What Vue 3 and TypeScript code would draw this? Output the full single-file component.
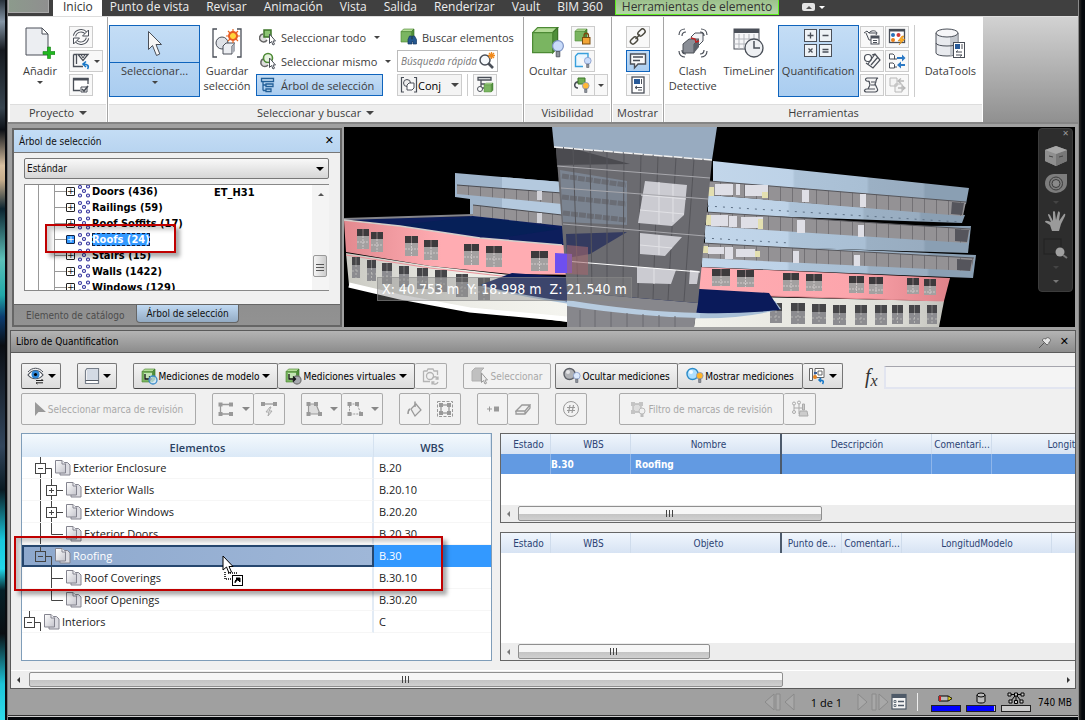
<script setup lang="ts">
import { h, ref } from 'vue'

const K = '#4a4f58'
const cube = (x: number, y: number, s: number) =>
  `<g transform="translate(${x} ${y}) scale(${s})"><path d="M0 4 4 0H20L16 4Z" fill="#b4dc98" stroke="#4d8a35"/><path d="M16 4 20 0V16L16 20Z" fill="#4f8f3a" stroke="#3c7428"/><path d="M0 4H16V20H0Z" fill="#7ab561" stroke="#4d8a35"/></g>`
const bulb = (x: number, y: number, c: string, s = 1) =>
  `<g transform="translate(${x} ${y}) scale(${s})"><circle cx="5" cy="5" r="4.5" fill="${c}" stroke="#7d93c4"/><path d="M3.5 9.5H6.5V14H3.5Z" fill="#8d949e" stroke="#4a4f58" stroke-width=".7"/></g>`
const node = (x: number, y: number) => `<rect x="${x - 2}" y="${y - 2}" width="4" height="4" fill="#999"/>`

type Glyph = [number, number, string]
const glyphs: Record<string, Glyph> = {
  add: [30, 32, `<path d="M1 1H17L23 7V28H1Z" fill="#eceef2" stroke="${K}"/><path d="M17 1V7H23Z" fill="#fff" stroke="${K}"/><path d="M22.5 20h3v4.5h4.5v3h-4.5v4h-3v-4h-4.5v-3h4.5Z" fill="#20b820" stroke="#138013" stroke-width=".6"/>`],
  refresh: [18, 18, `<g fill="none" stroke="${K}" stroke-width="3.4"><path d="M2.5 8C4 2 11 1.5 14 5M15.5 10C14 16 7 16.5 4 13"/></g><g fill="none" stroke="#fff" stroke-width="1.4"><path d="M2.5 8C4 2 11 1.5 14 5M15.5 10C14 16 7 16.5 4 13"/></g><path d="M16.5 2V8H10.5ZM1.5 16V10H7.5Z" fill="#fff" stroke="${K}"/>`],
  reset: [18, 18, `<path d="M1.5 2.5H4.5V12M1.5 2.5V14.5H11" fill="none" stroke="${K}" stroke-width="1.3"/><path d="M6 2.5H16L11 8.5Z" fill="#fff" stroke="${K}" stroke-width="1.3"/><path d="m9 2.5 2 3.5 2-3.5" fill="none" stroke="${K}"/><path d="M15.5 17c2-3 0-5-4-5M14 9.5 11 12l3 3" fill="none" stroke="#1878c8" stroke-width="1.6"/>`],
  options: [18, 18, `<path d="M16 8V2.5H1.5V14.5H8" fill="#fff" stroke="${K}" stroke-width="1.3"/><path d="M1 2H16.5V4.5H1Z" fill="${K}"/><path d="M9 11h6v5H9Z" fill="#fff" stroke="${K}"/><path d="m10 13 2 2 4-5" fill="none" stroke="${K}" stroke-width="1.6"/>`],
  cursor: [16, 28, `<path d="M1.5 1.5V19.5L5.5 15.5 9.5 25.5 12.8 24 9 14.5H14.5Z" fill="#f6f6f6" stroke="${K}"/>`],
  save: [32, 32, `<path d="M6 2H2V30H6M26 2H30V30H26" fill="none" stroke="${K}" stroke-width="1.3"/><circle cx="11" cy="16" r="6" fill="#dfe2e7" stroke="${K}"/><path d="m12 19 3-3h9l-3 3v8h-9Z" fill="#eceef2" stroke="${K}"/><path d="M21 19 24 16V24L21 27Z" fill="#a9adb5"/><circle cx="22" cy="9" r="4" fill="#ffd53c" stroke="#e85a28" stroke-width="2"/><path d="M22 2V6M22 12V16M15 9H19M25 9H29M17 4l3 3M27 4l-3 3M17 14l3-3M27 14l-3-3" stroke="#e8641e" stroke-width="1.2"/>`],
  selAll: [18, 18, `<path d="M4 6a4 4 0 1 0 4 6" fill="#ddd" stroke="#666" stroke-width="1.5"/><path d="M5 2h7v7H5Z" fill="#8cc474" stroke="#3c7428" stroke-width="1.5"/><path d="M10.5 6V15.5L12.5 13.5 14 17 15.5 16.2 14 13H16.5Z" fill="#fff" stroke="${K}"/>`],
  selSame: [18, 18, `<path d="M4 7a4 4 0 1 0 5 6" fill="#ddd" stroke="#666" stroke-width="1.5"/><circle cx="9" cy="6" r="4.5" fill="#e6f3df" stroke="#4d8a35" stroke-width="1.6"/><path d="M10.5 6V15.5L12.5 13.5 14 17 15.5 16.2 14 13H16.5Z" fill="#fff" stroke="${K}"/>`],
  tree: [16, 16, `<g fill="#cfe6fa" stroke="#225f98" stroke-width="1.3"><path d="M1.5 1.5h12v3h-12ZM6 7h7v2.5H6ZM6 12h5v2.5H6ZM3 4.5V13.5M3 8H6M3 13.5H6"/></g>`],
  find: [18, 18, `${cube(1, 1, 0.65)}<path d="M8 11.5 9.5 8h2v3h1V8h2l2 3.5V16h-3.5v-2.5H12V16H8Z" fill="#24578f" stroke="#16385e" stroke-width=".7"/>`],
  search: [18, 18, `<circle cx="7" cy="8" r="5" fill="#f5f8fb" stroke="${K}" stroke-width="1.5"/><path d="m10.5 11.5 4.5 4.5" stroke="${K}" stroke-width="2.6"/><path d="M13.5 0v7M10 3.5h7M11 1l5 5M16 1l-5 5" stroke="#f08a1c" stroke-width="1.3"/>`],
  sets: [18, 18, `<path d="M4 1.5H1.5V16H4M14 1.5H16.5V16H14" fill="none" stroke="${K}" stroke-width="1.2"/><circle cx="7" cy="7" r="3.5" fill="#eee" stroke="${K}"/><path d="M7 9 9 7h5v5l-2 2H7Z" fill="#fff" stroke="${K}"/>`],
  sectree: [18, 18, `<path d="M2 1.5h13V4H2ZM5 4V12M5 8H9M5 12H8" fill="#fff" stroke="${K}" stroke-width="1.3"/><circle cx="4" cy="13" r="2.5" fill="#fff" stroke="${K}"/>${cube(8, 7, 0.45)}`],
  hide: [32, 32, `<g transform="scale(1.25)">${cube(0.5, 0.5, 1)}</g>${bulb(20, 13, '#c9dcfa', 1.2)}`],
  lock: [18, 18, `${cube(1, 1, 0.6)}<path d="M10 9V7.5a2.2 2.2 0 0 1 4.5 0V9" fill="none" stroke="#7a4c10" stroke-width="1.3"/><rect x="8.5" y="9.5" width="7.5" height="6.5" fill="#f2a536" stroke="#7a4c10"/>`],
  hideUn: [18, 18, `<path d="M1.5 4 4 1.5H14V9M1.5 4V14.5H9" fill="#e8f6ff" stroke="#38a0dc" stroke-width="1.4"/>${bulb(10, 5, '#c9dcfa', 0.75)}`],
  unhide: [20, 18, `<path d="M6 6C1 5 0 12 5 12" fill="none" stroke="${K}" stroke-width="1.6"/><path d="M5 2h7v6H5Z" fill="#6fae55" stroke="#3c7428"/>${bulb(9, 6, '#ffb838', 0.75)}`],
  link: [18, 18, `<g fill="none" stroke="#4c4a40" stroke-width="1.5"><rect x="-4" y="-2.5" width="8" height="5" rx="2.5" transform="translate(12.5 4.5) rotate(-45)"/><rect x="-4" y="-2.5" width="8" height="5" rx="2.5" transform="translate(5 12.5) rotate(-45)"/><path d="m6.5 11 4.5-4.5"/></g>`],
  note: [18, 18, `<path d="M1.5 2H16.5V12H9L5.5 16V12H1.5Z" fill="#f8f8f8" stroke="${K}" stroke-width="1.4"/><path d="M4 5H14M4 8.5H11" stroke="${K}" stroke-width="1.3"/>`],
  props: [16, 18, `<rect x="2" y="1" width="12" height="16" fill="#fff" stroke="${K}" stroke-width="1.3"/><rect x="4" y="3" width="6" height="5" fill="#285a98"/><path d="M11.5 3V8M5 11.5H12M8 14H12M7 10 5 11.5 7 13" stroke="${K}" fill="none"/>`],
  clash: [32, 32, `<path d="m14 10 4-4h8v8l-6 6Z" fill="#f2f3f5" stroke="${K}"/><path d="m6 17 6-5h10l-5 5v9H6Z" fill="#8a8e96" stroke="#4c5057"/><path d="m17 17 5-5v8l-5 6Z" fill="#5c6068"/><path d="m14 11 4 1 1 3 3-1" stroke="#c02020" stroke-width="1.4" fill="none"/><g fill="none" stroke="${K}" stroke-width="1.2"><path d="M2 8C2 4 5 2 8 2M5 9c0-3 2-4 4-4M30 8c0-4-3-6-6-6M27 9c0-3-2-4-4-4M2 24c0 4 3 6 6 6M5 23c0 3 2 4 4 4M30 24c0 4-3 6-6 6M27 23c0 3-2 4-4 4"/></g>`],
  timeliner: [32, 32, `<rect x="1" y="2" width="25" height="20" fill="#f6f6f8" stroke="${K}"/><path d="M1 2H26V6H1Z" fill="${K}"/><path d="M1 12H26M1 17H26M6 7V22M11 7V22M16 7V22M21 7V22" stroke="#b4b7bd"/><circle cx="21" cy="21" r="9" fill="#eef0f3" stroke="${K}" stroke-width="1.3"/><path d="M21 14V21H27" fill="none" stroke="${K}" stroke-width="1.5"/>`],
  quant: [30, 30, `<g fill="#eef2f6" stroke="${K}"><rect x="1.5" y="1.5" width="12" height="12"/><rect x="16.5" y="1.5" width="12" height="12"/><rect x="1.5" y="16.5" width="12" height="12"/><rect x="16.5" y="16.5" width="12" height="12"/></g><path d="M4.5 7.5h6M7.5 4.5v6M19.5 7.5h6M5.5 20.5l4 4M9.5 20.5l-4 4M19.5 21.5h6M19.5 24h6" stroke="${K}" stroke-width="1.3"/>`],
  render: [18, 18, `<path d="M1 5l3-2 2 2c2-3 7-3 8 0l-1 2M3 5l3 7h3M6 5h8" fill="#eee" stroke="${K}"/><rect x="8" y="8" width="8" height="8" fill="#fff" stroke="${K}"/><path d="M8 8h8v2.5H8Z" fill="${K}"/><path d="M10 12.5h4M10 14.5h4" stroke="${K}"/>`],
  script: [18, 18, `<rect x="1.5" y="1.5" width="15" height="13" fill="#fff" stroke="${K}" stroke-width="1.3"/><path d="M1 1H17V3.5H1Z" fill="${K}"/><circle cx="5" cy="7" r="2" fill="#2870b8"/><circle cx="10.5" cy="7" r="2" fill="#d03838"/><circle cx="5" cy="12" r="2" fill="#e8801c"/><path d="m14 8-4 5h3l-2 4 6-6h-3l2-3Z" fill="#ffb020" stroke="#c87810" stroke-width=".5"/>`],
  appear: [18, 18, `<circle cx="5" cy="6" r="3.5" fill="#fff" stroke="${K}" stroke-width="1.2"/><path d="m9 3 3-1 5 6-7 8-7-5M12 2 5 12M15 5l-7 8" fill="none" stroke="${K}" stroke-width="1.2"/>`],
  compare: [18, 18, `<g fill="#fff" stroke="${K}"><path d="M1.5 2H5L6.5 3.5V7h-5ZM1.5 11H5L6.5 12.5V16h-5Z"/><path d="M6 7h3M6 15h3"/></g><path d="M9 5h5V2.5l3.5 3.5L14 9.5V7H9ZM17 12h-4V9.5L9 13l4 3.5V14h4Z" fill="#2a78c4"/>`],
  batch: [18, 18, `<path d="M4 2H15c-3 1-1 3-3 6l2 4c2 3-1 4-2 4H3c-3-1-1-3 1-3h8M4 2C1 3 3 6 6 5M6 5l1 4-2 4M8 6h4M8 9h4" fill="#f4f4f4" stroke="${K}" stroke-width="1.2"/>`],
  sync: [18, 18, `<g fill="#f4f4f4" stroke="#b8b8b8"><path d="M2 2h7v8H2ZM7 8h7v8H7Z"/></g><path d="m16 5-5 0M13 2.5 10 5l3 2.5M10 12h6M14 9.5l3 2.5-3 2.5" fill="none" stroke="#b8b8b8" stroke-width="1.4"/>`],
  data: [32, 32, `<path d="M2 6V26c0 4 22 4 22 0V6" fill="#e8eaee" stroke="${K}"/><path d="M16 9.5V28.5c5 0 7-1 7.5-3V6Z" fill="#c4c8ce"/><ellipse cx="13" cy="6" rx="11" ry="4" fill="#f6f6f8" stroke="${K}"/><path d="M2 16c0 4 22 4 22 0" fill="none" stroke="${K}"/><rect x="19.5" y="15.5" width="11" height="15" fill="#fff" stroke="${K}"/><rect x="21" y="17" width="5" height="5" fill="#285a98"/><path d="M28 17V22M22 25h6M22 28h6M24 23.5 22 25M26 29.5 28 28" stroke="${K}" fill="none"/>`],
  fam: [14, 14, `<g fill="#fff" stroke="#30309c" stroke-width="1.1"><circle cx="3" cy="3" r="1.5"/><circle cx="11" cy="2.5" r="1.5"/><circle cx="7" cy="7" r="1.5"/><circle cx="3" cy="11.5" r="1.5"/><circle cx="11" cy="11.5" r="1.5"/></g>`],
  eye: [18, 18, `<path d="M1 8C5 2 12 2 16 8 12 13 5 13 1 8Z" fill="#fff" stroke="${K}" stroke-width="1.2"/><path d="M1 5C5 0 12 0 16 5" fill="none" stroke="${K}"/><circle cx="8.5" cy="7.5" r="4" fill="#2f86d6"/><circle cx="8.5" cy="7.5" r="1.6" fill="#000"/><path d="M9 13.5h7M14.5 12l1.5 1.5M10.5 17 9 15.8h7" stroke="#222" fill="none"/>`],
  book: [16, 18, `<path d="M1.5 3.5 3 1.5H14.5V16.5H1.5Z" fill="#fff" stroke="#777f8a" stroke-width="1.2"/><path d="M3 2H14V13H3Z" fill="#d3dae4"/><path d="M1.5 13.5H14.5" stroke="#555c66"/>`],
  model: [17, 17, `${cube(1, 1, 0.65)}<path d="M3 5h8v7H3Z" fill="#c4e4b4"/><path d="M4 6v5h6M8 8.5l2.5 2.5L8 13.5" fill="none" stroke="#111" stroke-width="1.3"/><circle cx="12" cy="12" r="4" fill="#cdeafd" fill-opacity=".7" stroke="#3c8cc8" stroke-width="1.3"/>`],
  virt: [17, 17, `${cube(1, 1, 0.65)}<path d="M3 5h8v7H3Z" fill="#c4e4b4"/><circle cx="12" cy="12" r="4" fill="#a8aab0" stroke="#777" stroke-width="1.3"/><path d="M4 6v5h6M8 8.5l2.5 2.5L8 13.5" fill="none" stroke="#111" stroke-width="1.3"/>`],
  camera: [18, 18, `<g fill="none" stroke="#b4b4b4" stroke-width="1.3"><path d="M1.5 4H5L6 2h5l1 2h3.5V8M1.5 4V14.5H8"/><circle cx="8" cy="9" r="3.5"/><path d="M10 12c1-3 5-3 6 0M16 9.5V12h-2.5M16 15c-1 3-5 3-6 0M10 17.5V15h2.5"/></g>`],
  boxsel: [18, 18, `<path d="m1 4 3-3h9l-3 3v10H1Z" fill="#c0c0c0" stroke="#b0b0b0"/><path d="M10.5 6v9.5l2-2 1.5 3.5 1.5-.8L14 13h2.5Z" fill="#eee" stroke="#999"/>`],
  hideM: [18, 18, `<circle cx="6.5" cy="7" r="5.5" fill="#b0b2b6" stroke="#5c5f66" stroke-width="1.4"/><circle cx="5" cy="5" r="2" fill="#e4e4e6"/>${bulb(10, 5, '#dce9fb', 0.75)}`],
  showM: [18, 18, `<circle cx="6.5" cy="7" r="5.5" fill="#aee0ff" stroke="#2c8cc8" stroke-width="1.4"/><circle cx="5" cy="5" r="2" fill="#f4fbff"/>${bulb(10, 5, '#ffb428', 0.75)}`],
  resetM: [18, 18, `<path d="M1.5 1.5h3v12h-3ZM7 1.5h9v9H7ZM10 4h4v4h-4Z" fill="#fff" stroke="#666"/><path d="M6 5h3v2H6Z" fill="#38609c"/><circle cx="7" cy="10" r="2" fill="#e88420"/><path d="M14.5 17c2-3 0-4-3-4M13 11l-2 2 2 2" fill="none" stroke="#1878c8" stroke-width="1.5"/>`],
  ptr: [13, 16, `<path d="M1 1V15L4.5 11 12 11Z" fill="#999"/>`],
  poly: [18, 16, `<path d="M14 3.5H3.5V13H14" fill="none" stroke="#999" stroke-width="1.3"/>${node(3.5, 3.5)}${node(14, 3.5)}${node(3.5, 13)}${node(14, 13)}`],
  quick: [18, 16, `<path d="M2 3H16" stroke="#999" stroke-width="1.3"/>${node(3, 3)}${node(15, 3)}<path d="m10 6-4 5h3l-1 4 4-5H9l2-4Z" fill="#eee" stroke="#aaa"/>`],
  area: [18, 16, `<path d="M3.5 3H11L15 13H3.5Z" fill="#ddd" stroke="#999" stroke-width="1.2"/>${node(3.5, 3)}${node(11, 3)}${node(15, 13)}${node(3.5, 13)}`],
  perim: [18, 16, `<path d="M3.5 3H11L15 13H3.5Z" fill="none" stroke="#999" stroke-dasharray="2 1"/>${node(3.5, 3)}${node(11, 3)}${node(15, 13)}${node(3.5, 13)}`],
  bucket: [16, 16, `<path d="m4 8 5-5 5 6-6 6Z" fill="#eee" stroke="#999" stroke-width="1.2"/><path d="M8 6V0.5M3 8c-2 1-2 4-2 5" fill="none" stroke="#999" stroke-width="1.5"/>`],
  backout: [18, 18, `<rect x="1.5" y="1.5" width="15" height="15" fill="none" stroke="#999" stroke-dasharray="3 1.5"/><rect x="5" y="5" width="8" height="8" fill="none" stroke="#999" stroke-width="1.3"/>${node(5, 5)}${node(13, 5)}${node(5, 13)}${node(13, 13)}`],
  plus: [14, 12, `<path d="M1 6H6M3.5 3.5V8.5" stroke="#999"/><rect x="8" y="3.5" width="5" height="5" fill="#999"/>`],
  eraser: [16, 14, `<path d="m1 9 6-6h8l-5 6ZM1 9v3h9l5-6V3M10 9v3" fill="#eee" stroke="#999" stroke-width="1.3"/>`],
  hash: [18, 18, `<circle cx="9" cy="9" r="7.5" fill="none" stroke="#999"/><path d="M8 5 6.5 13M11.5 5 10 13M5 7.5h8M5 10.5h8" stroke="#999" stroke-width="1.2"/>`],
  filter: [17, 17, `<path d="M3 3h8v8H3Z" fill="#ddd" stroke="#bbb" stroke-width="1.3"/><path d="M1 1h4v4H1ZM9 1h4v4H9ZM1 9h4v4H1Z" fill="#c4c4c4"/><circle cx="12" cy="10" r="3" fill="#f0f0f0" stroke="#bbb"/><path d="M10.5 13h3v3h-3Z" fill="#bbb"/>`],
  brush: [18, 18, `<g fill="none" stroke="#aaa"><circle cx="3" cy="3.5" r="1.5"/><circle cx="8" cy="2.5" r="1.5"/><circle cx="3" cy="12" r="1.5"/><path d="M8 4v10M3 8h9M3 5v5"/><path d="M11.5 4h2v6h-2ZM9 11h7l1 5H8Z" fill="#ccc"/></g>`],
  pin: [14, 14, `<path d="m1 13 5-5" stroke="#555"/><path d="m4 5 5 5c2-1 2-2 2-3 2 0 2-3 0-4s-3 0-3 1c-2-1-3 0-4 1Z" fill="#e4e4e4" stroke="#666"/>`],
  pages: [17, 17, `<path d="M8 3.5H13.5L16 6V16H6V3.5Z" fill="#dcdce2" stroke="#84848f"/><path d="M1.5 1.5H8L11.5 5V14H1.5Z" fill="url(#pg)" stroke="#84848f"/><path d="M8 1.5V5H11.5" fill="#f4f4f8" stroke="#84848f"/>`],
  sheet: [16, 18, `<rect x="1" y="1.5" width="14" height="14.5" fill="#f4f4f4" stroke="#4f5a68" stroke-width="1.2"/><path d="M1 1.5h14V5H1Z" fill="#4f5a68"/><path d="M3 7.5h2v2H3ZM3 11.5h2v2H3Z" fill="none" stroke="#4f5a68" stroke-width=".8"/><path d="M7 8.5h6M7 12.5h6" stroke="#4f5a68" stroke-width="1.3"/>`],
  first: [18, 20, `<g fill="#a8a8a8" stroke="#8a8a8a"><path d="M10 2V18L1 10ZM12 2h4V18h-4Z"/></g>`],
  prev: [12, 20, `<path d="M10 2V18L1 10Z" fill="#a8a8a8" stroke="#8a8a8a"/>`],
  next: [12, 20, `<path d="M1 2V18L10 10Z" fill="#a8a8a8" stroke="#8a8a8a"/>`],
  last: [18, 20, `<g fill="#a8a8a8" stroke="#8a8a8a"><path d="M1 2h4V18H1ZM8 2V18L17 10Z"/></g>`],
  pencil: [16, 12, `<path d="M1 4H10L14 6.5 10 9H1Z" fill="#bbb" stroke="#000"/><path d="M1 4h2v5H1Z" fill="#d02020"/><path d="M10 4 14 6.5 10 9Z" fill="#e8d820" stroke="#000" stroke-width=".6"/>`],
  disk: [12, 12, `<path d="M2 3V9.5c0 2 8 2 8 0V3" fill="#bbb" stroke="#000"/><ellipse cx="6" cy="3" rx="4" ry="2" fill="#bbb" stroke="#000"/>`],
  web: [18, 12, `<path d="M3 2.5H15M9 2.5 4 9M9 2.5V10M9 2.5 14 9" stroke="#000" fill="none"/><g fill="#ccc" stroke="#000"><path d="M1 1h3v3H1ZM7.5 1h3v3h-3ZM14 1h3v3h-3ZM2 8h3v3H2ZM7.5 8.5h3v3h-3ZM13 8h3v3h-3Z"/></g>`],
  viewcube: [24, 22, `<path d="m12 1 11 4v11l-11 5L1 16V5Z" fill="#8d8d8d"/><path d="m12 9 11-4v11l-11 5Z" fill="#777"/><path d="m1 5 11 4v12L1 16Z" fill="#8f8f8f"/><path d="m1 5 11-4 11 4-11 4Z" fill="#a8a8a8"/><path d="m5 11 4 1M15 12l4-1" stroke="#444"/>`],
  wheel: [24, 22, `<path d="M10 1h13v9a11 10 0 0 1-11 10C6 20 1 16 1 10.5S5 1 10 1Z" fill="#7d7d7d"/><circle cx="12" cy="10.5" r="6.5" fill="none" stroke="#3c3c3c"/><circle cx="12" cy="10.5" r="4" fill="#8a8a8a" stroke="#3c3c3c"/>`],
  hand: [24, 22, `<path d="M8 21 6 15 1 12q0-2 3-1l3 1L4 5q0-2 2 0l3 6V2q1-2 2 0l1 8 2-8q1-2 2 1l-1 8 5-7q2-1 1 2l-4 8-2 7Z" fill="#9a9a9a"/>`],
  zoomw: [26, 22, `<rect x="1" y="1" width="17" height="15" fill="none" stroke="#222"/><circle cx="17" cy="14" r="4.5" fill="#a0a0a0"/><path d="m20 17 4 3" stroke="#777" stroke-width="2"/>`],
}
const Icon = (p: { n: string }) => {
  const g = glyphs[p.n]
  return h('svg', { viewBox: `0 0 ${g[0]} ${g[1]}`, width: g[0], height: g[1], fill: 'none', 'aria-hidden': 'true', innerHTML: g[2] })
}

const menus = ['Punto de vista', 'Revisar', 'Animación', 'Vista', 'Salida', 'Renderizar', 'Vault', 'BIM 360']
const toolGrid = [
  ['render', 'Autodesk Rendering'], ['script', 'Animator'],
  ['appear', 'Appearance Profiler'], ['compare', 'Comparar'],
  ['batch', 'Batch Utility'], ['sync', 'Sincronizar'],
]
const quick = ref('')
const families = ['Doors (436)', 'Railings (59)', 'Roof Soffits (17)', 'Roofs (24)', 'Stairs (15)', 'Walls (1422)', 'Windows (129)']

interface Item { name: string; wbs: string; depth: number; box?: '+' | '-'; lines: string }
const items: Item[] = [
  { name: 'Exterior Enclosure', wbs: 'B.20', depth: 1, box: '-', lines: 'M18.5 0V22M23 11.5H29.5V22' },
  { name: 'Exterior Walls', wbs: 'B.20.10', depth: 2, box: '+', lines: 'M18.5 0V22M29.5 0V22M29 11.5H41' },
  { name: 'Exterior Windows', wbs: 'B.20.20', depth: 2, box: '+', lines: 'M18.5 0V22M29.5 0V22M29 11.5H41' },
  { name: 'Exterior Doors', wbs: 'B.20.30', depth: 2, lines: 'M18.5 0V22M29.5 0V11.5H41' },
  { name: 'Roofing', wbs: 'B.30', depth: 1, box: '-', lines: 'M18.5 0V6M23 11.5H29.5V22' },
  { name: 'Roof Coverings', wbs: 'B.30.10', depth: 2, lines: 'M29.5 0V22M29 11.5H41' },
  { name: 'Roof Openings', wbs: 'B.30.20', depth: 2, lines: 'M29.5 0V11.5H41' },
  { name: 'Interiors', wbs: 'C', depth: 0, box: '-', lines: 'M7.5 0V11M12 11.5H18.5V20' },
]

const pts = (a: number[][]) => a.map((p) => p.join(',')).join(' ')
const slab = (x0: number, y0: number, y1: number, x2: number, y2: number, y3: number) =>
  pts([[x0, y0], [x2, y2], [x2 - 3, y3], [x0, y1]])
const pinkWindows = [
  [357, 229, 12, 20], [371, 232, 12, 20], [405, 236, 13, 20], [424, 240, 14, 20], [464, 244, 15, 21], [486, 246, 16, 21], [531, 251, 17, 20],
  [712, 269, 18, 17], [737, 270, 17, 17], [783, 273, 16, 18], [806, 274, 16, 17], [849, 276, 15, 17], [869, 277, 14, 17], [907, 278, 12, 16], [924, 279, 12, 16],
]
const creamWindows = [
  [352, 257, 8, 21], [367, 260, 9, 21], [382, 263, 10, 21], [399, 266, 10, 21], [417, 268, 11, 21], [435, 270, 12, 22], [456, 274, 12, 23], [478, 278, 12, 22],
  [770, 303, 12, 20], [791, 303, 14, 21], [812, 304, 14, 20], [833, 305, 13, 20], [855, 305, 12, 20], [875, 305, 12, 20], [892, 305, 11, 19], [909, 305, 11, 19], [927, 305, 10, 19],
]
</script>

<template>
  <div class="window">
    <svg width="0" height="0" class="defs" aria-hidden="true"><defs><linearGradient id="pg" x1="0" y1="0" x2="1" y2="1"><stop offset="0" stop-color="#fff" /><stop offset="1" stop-color="#c4c4cc" /></linearGradient></defs></svg>
    <div class="glass left"></div>
    <main class="app">
      <nav class="menubar">
        <button class="appbtn" aria-label="Menú de la aplicación"></button>
        <button class="tab on">Inicio</button>
        <button v-for="m in menus" :key="m" class="tab">{{ m }}</button>
        <button class="tab context">Herramientas de elemento</button>
        <button class="mini" aria-label="Minimizar cinta"><i class="up"></i></button>
        <i class="dn light"></i>
      </nav>

      <div class="ribbon">
        <section class="panel">
          <div class="pbody proj">
            <button class="big addb"><Icon n="add" /><span>Añadir</span><i class="dn"></i></button>
            <div class="stack">
              <button class="sm" aria-label="Actualizar"><Icon n="refresh" /></button>
              <button class="sm wide" aria-label="Restablecer"><Icon n="reset" /><i class="dn"></i></button>
              <button class="sm" aria-label="Opciones de archivo"><Icon n="options" /></button>
            </div>
          </div>
          <h2>Proyecto <i class="dn big-dn"></i></h2>
        </section>
        <section class="panel p-sel">
          <div class="pbody">
            <button class="big split"><span class="half"><Icon n="cursor" /></span><span>Seleccionar...</span><i class="dn"></i></button>
            <button class="big save"><Icon n="save" /><span>Guardar<br />selección</span></button>
            <div class="stack list">
              <button class="row"><Icon n="selAll" />Seleccionar todo<i class="dn"></i></button>
              <button class="row"><Icon n="selSame" />Seleccionar mismo<i class="dn"></i></button>
              <button class="row active"><Icon n="tree" />Árbol de selección</button>
            </div>
            <div class="stack finds">
              <button class="row"><Icon n="find" />Buscar elementos</button>
              <label class="quick"><input v-model="quick" type="text" placeholder="Búsqueda rápida" aria-label="Búsqueda rápida" /><Icon n="search" /></label>
              <div class="setrow">
                <label class="conj"><Icon n="sets" /><select aria-label="Conjuntos"><option>Conj</option></select><i class="dn big-dn"></i></label>
                <span class="vsep"></span>
                <button class="sm" aria-label="Árbol de conjuntos"><Icon n="sectree" /></button>
              </div>
            </div>
          </div>
          <h2>Seleccionar y buscar <i class="dn big-dn"></i></h2>
        </section>
        <section class="panel p-vis">
          <div class="pbody">
            <button class="big ocult"><Icon n="hide" /><span>Ocultar</span></button>
            <div class="stack">
              <button class="sm" aria-label="Requerir"><Icon n="lock" /></button>
              <button class="sm" aria-label="Ocultar no seleccionados"><Icon n="hideUn" /></button>
              <div class="pair"><button class="sm" aria-label="Mostrar todo"><Icon n="unhide" /></button><button class="sm thin" aria-label="Más opciones"><i class="dn"></i></button></div>
            </div>
          </div>
          <h2>Visibilidad</h2>
        </section>
        <section class="panel p-show">
          <div class="pbody">
            <div class="stack">
              <button class="sm" aria-label="Vínculos"><Icon n="link" /></button>
              <button class="sm active" aria-label="Propiedades rápidas"><Icon n="note" /></button>
              <button class="sm" aria-label="Propiedades"><Icon n="props" /></button>
            </div>
          </div>
          <h2>Mostrar</h2>
        </section>
        <section class="panel p-tools">
          <div class="pbody">
            <button class="big t1"><Icon n="clash" /><span>Clash<br />Detective</span></button>
            <button class="big t2"><Icon n="timeliner" /><span>TimeLiner</span></button>
            <button class="big t3"><Icon n="quant" /><span>Quantification</span></button>
            <div class="grid6"><button v-for="t in toolGrid" :key="t[0]" class="sm" :aria-label="t[1]"><Icon :n="t[0]" /></button></div>
            <span class="vsep tall"></span>
            <button class="big t4"><Icon n="data" /><span>DataTools</span></button>
          </div>
          <h2>Herramientas</h2>
        </section>
        <div class="rest"></div>
      </div>

      <div class="docks">
        <section class="dock">
          <header class="dtitle"><span>Árbol de selección</span><button class="close" aria-label="Cerrar">✕</button></header>
          <div class="dbody">
            <div class="combo"><select aria-label="Orden del árbol"><option>Estándar</option></select><i class="dn big-dn"></i></div>
            <div class="tree">
              <ul>
                <li v-for="(f, i) in families" :key="f" :class="{ sel: i === 3 }">
                  <i class="trunk"></i><i class="branch"></i><i class="box">+</i><Icon n="fam" /><b>{{ f }}</b>
                </li>
              </ul>
              <b class="other">ET_H31</b>
              <div class="vscroll"><i class="up"></i><span class="vthumb"></span></div>
            </div>
            <div class="mark mark-a"></div>
          </div>
          <div class="dtabs"><button>Elemento de catálogo</button><button class="on">Árbol de selección</button></div>
        </section>

        <section class="view">
          <svg class="scene" viewBox="344 127 731 200" preserveAspectRatio="xMinYMin slice" role="img" aria-label="Modelo 3D">
            <defs>
              <linearGradient id="bl" x1="0" x2="1"><stop offset="0" stop-color="#c2d6ea" /><stop offset=".31" stop-color="#bdd2e7" /><stop offset=".32" stop-color="#adc3d8" /><stop offset=".6" stop-color="#a9bfd4" /><stop offset=".61" stop-color="#9bb0c4" /><stop offset=".82" stop-color="#98acc0" /><stop offset=".83" stop-color="#8a9fb3" /><stop offset="1" stop-color="#8a9fb3" /></linearGradient>
              <linearGradient id="pl" x1="0" x2="1"><stop offset="0" stop-color="#e2898f" /><stop offset=".4" stop-color="#ffacb2" /><stop offset="1" stop-color="#ffacb2" /></linearGradient>
              <linearGradient id="pr" x1="0" x2="1"><stop offset="0" stop-color="#ffacb2" /><stop offset=".6" stop-color="#fca5ac" /><stop offset="1" stop-color="#df8289" /></linearGradient>
              <linearGradient id="cr" x1="0" x2="1"><stop offset="0" stop-color="#f2f2ec" /><stop offset=".8" stop-color="#deded8" /><stop offset="1" stop-color="#c2c2bc" /></linearGradient>
              <linearGradient id="cl" x1="0" x2="1"><stop offset="0" stop-color="#c9c9c2" /><stop offset=".5" stop-color="#ecece6" /><stop offset="1" stop-color="#f4f4ef" /></linearGradient>
              <pattern id="cells" width="12" height="10" patternUnits="userSpaceOnUse"><rect width="12" height="10" fill="#949295" /><path d="M.5 0V10" stroke="#737175" /></pattern>
            </defs>
            <rect x="344" y="127" width="731" height="200" fill="#000" />
            <polygon points="455,173 502,177 562,182 562,236 470,218 470,199 455,197" fill="#9fb4ca" />
            <polygon points="502,177 562,182 562,234 502,222" fill="#b4c9de" />
            <polygon points="457,185 562,193 562,204 457,194" fill="url(#cells)" />
            <polygon points="473,205 562,215 562,227 473,216" fill="url(#cells)" />
            <path d="M457 185 562 193M473 205 562 215" stroke="#4b4b50" fill="none" />
            <path d="M537 191h5v9h-5ZM537 213h5v10h-5Z" fill="#d2d2d8" />
            <polygon points="344,219 473,216 563,226 628,232 590,254 480,238 400,226" fill="#0d1e5c" />
            <polygon points="400,225 470,217 520,222 560,229 500,238" fill="#062058" />
            <path d="M344 219 473 215" stroke="#85858a" stroke-width="2" />
            <polygon points="344,220 400,226 480,238 562,245 588,246 588,275 510,274 430,266 346,252" fill="url(#pl)" />
            <path d="M344 220 400 226 480 238 562 245" stroke="#d3d0cc" fill="none" stroke-width="1.5" />
            <polygon points="346,253 430,266 510,275 567,282 567,322 470,309 400,295 349,285" fill="url(#cl)" />
            <path d="M349 285 400 297 470 310 567 319" stroke="#fff" stroke-width="5" fill="none" />
            <path d="M346 255 430 268 510 277" stroke="#eb9299" fill="none" />

            <polygon :points="slab(713, 161, 182, 969, 188, 204)" fill="url(#bl)" />
            <polygon :points="slab(708, 195, 214, 965, 215, 223)" fill="url(#bl)" />
            <polygon :points="slab(705, 225, 245, 971, 226, 253)" fill="url(#bl)" />
            <polygon :points="slab(702, 243, 267, 976, 255, 278)" fill="url(#bl)" />
            <polygon :points="slab(709, 181, 195, 966, 202, 216)" fill="url(#cells)" />
            <polygon :points="slab(706, 212, 226, 970, 229, 243)" fill="url(#cells)" />
            <polygon :points="slab(702, 243, 258, 974, 258, 271)" fill="url(#cells)" />
            <path d="M709 181 966 202M706 212 970 229M702 243 974 258" stroke="#55555a" fill="none" />
            <g fill="#dfdfe6">
              <path d="M715 184h18v11h-18ZM736 184h4v11h-4ZM745 185h23v11h-23ZM802 190h7v12h-7ZM860 194h6v13h-6ZM711 215h17v11h-17ZM729 216h8v11h-8ZM741 217h22v11h-22ZM797 220h8v13h-8ZM858 225h6v12h-6ZM708 247h16v7h-16ZM725 247h8v12h-8ZM736 249h19v8h-19ZM793 251h6v12h-6ZM854 255h6v11h-6Z" />
            </g>
            <g fill="#e3dfb0"><path d="M708 187h6v9h-6ZM762 192h6v6h-6ZM706 215h5v10h-5ZM758 219h5v10h-5ZM703 246h5v7h-5ZM755 251h5v6h-5Z" /></g>
            <g fill="#55555c"><path d="M952 202l12 1-2 12-11-1ZM955 229l14 1-2 12-12-1ZM957 259l15 1-2 11-13-1Z" /></g>
            <path d="M707 206 960 222M704 238 790 243" stroke="#5d7085" stroke-dasharray="2 6" fill="none" />
            <polygon points="698,267 950,278 944,301 698,294" fill="url(#pr)" />
            <polygon points="698,296 944,301 939,327 694,327" fill="url(#cr)" />
            <path d="M770 296 944 301" stroke="#e78d94" />
            <g v-for="w in pinkWindows" :key="'p' + w[0]">
              <rect :x="w[0]" :y="w[1]" :width="w[2]" :height="w[3]" fill="#a3a0a0" />
              <rect :x="w[0]" :y="w[1]" :width="w[2]" height="7" fill="#3c3a3c" />
              <path :d="`M${w[0] + w[2] / 2} ${w[1] + 7}v${w[3] - 7}M${w[0]} ${w[1] + 13}h${w[2]}`" stroke="#d0caca" stroke-dasharray="2 1" />
              <path :d="`M${w[0] + w[2] / 2} ${w[1]}v7`" stroke="#8a7a7c" />
            </g>
            <g v-for="w in creamWindows" :key="'c' + w[0]">
              <rect :x="w[0]" :y="w[1]" :width="w[2]" :height="w[3]" fill="#8c8c90" />
              <rect :x="w[0]" :y="w[1]" :width="w[2]" height="8" fill="#454548" />
              <path :d="`M${w[0] + w[2] / 2} ${w[1] + 8}v${w[3] - 8}M${w[0]} ${w[1] + 14}h${w[2]}`" stroke="#b4b4b2" stroke-dasharray="2 2" />
              <path :d="`M${w[0] + w[2] / 2} ${w[1]}v8`" stroke="#7c7c7c" />
            </g>
            <path d="M480 287Q560 306 690 318 740 320 781 309L775 301Q600 300 480 287Z" fill="#a8bfd6" />
            <path d="M480 285 512 273 567 277 700 289 769 293 780 310Q740 314 700 313 560 306 480 285Z" fill="#0a1a5a" />
            <polygon points="567,292 698,303 694,327 567,327" fill="#87878c" />
            <path d="M567 306Q640 317 700 318V313Q640 312 567 300Z" fill="#b7cce0" />
            <path d="M580 310v17M595 310v17M611 312v15M627 313v14M643 314v13M659 315v12M675 316v11" stroke="#6b6b70" />
            <polygon points="552,127 717,127 712,160 554,147" fill="#98abc0" />
            <polygon points="556,147 712,160 698,303 567,292" fill="#6b6b70" />
            <polygon points="556,147 575,149 630,164 557,165" fill="#4b4b50" />
            <polygon points="560,170 627,181 627,225 563,222" fill="#7b8491" />
            <polygon points="566,234 627,232 590,254 567,258" fill="#343b60" />
            <path d="M562 176 626 185M562 197 626 204M563 213 626 220" stroke="#6a6d75" stroke-width="5" stroke-dasharray="7 1" />
            <path d="M573 149 578 292M590 150 592 294M607 152 607 295M624 153 623 297M641 154 638 298M658 156 653 299M676 157 668 300M694 159 684 301" stroke="#55555a" />
            <g fill="#cbcbd1"><path d="M645 181 687 185 684 215 672 226 638 223ZM640 233 682 237 665 256 640 254ZM637 267 676 270 671 284 637 283Z" /><path d="M690 270l9 1-2 13h-8Z" /></g>
            <path d="M659 182v42M673 184v38M641 195l45 4M640 210l44 4M659 235v20M640 245l32 3M654 268v16" stroke="#e2e2e6" />
            <path d="M554 147 712 160" stroke="#f2f2f2" stroke-width="1.5" stroke-dasharray="9 1" />
            <path d="M557 166 710 178M561 188 708 199M563 224 705 236" stroke="#a8a8ad" />
            <path d="M565 261 700 272" stroke="#fff" />
            <polygon points="555,253 572,254 572,273 555,273" fill="#6e4ff0" />
            <polygon points="567,245 588,247 588,275 567,274" fill="#a2686e" fill-opacity=".6" />
          </svg>
          <div class="coords">X: 40.753 m&nbsp; Y: 18.998 m&nbsp; Z: 21.540 m</div>
          <div class="navbar3d">
            <span class="nx">✕</span>
            <Icon n="viewcube" /><Icon n="wheel" /><i class="dn"></i><Icon n="hand" /><Icon n="zoomw" /><i class="dn"></i><i class="dn last"></i>
          </div>
        </section>
      </div>

      <section class="quantp">
        <header class="qtitle"><span>Libro de Quantification</span><Icon n="pin" /><button class="close" aria-label="Cerrar libro">✕</button></header>
        <div class="qbody">
          <div class="bar b1">
            <div class="grp"><button class="w40" aria-label="Vista"><Icon n="eye" /><i class="dn big-dn"></i></button></div>
            <div class="grp"><button class="w40" aria-label="Catálogo"><Icon n="book" /><i class="dn big-dn"></i></button></div>
            <div class="grp">
              <button class="w145"><Icon n="model" />Mediciones de modelo<i class="dn big-dn"></i></button>
              <button class="w137"><Icon n="virt" />Mediciones virtuales<i class="dn big-dn"></i></button>
              <button class="w32" disabled aria-label="Actualizar vista"><Icon n="camera" /></button>
            </div>
            <div class="near">
              <div class="grp"><button class="w88" disabled><Icon n="boxsel" />Seleccionar</button></div>
              <div class="grp">
                <button class="w123"><Icon n="hideM" />Ocultar mediciones</button>
                <button class="w125"><Icon n="showM" />Mostrar mediciones</button>
                <button class="w40" aria-label="Restablecer aspecto"><Icon n="resetM" /><i class="dn big-dn"></i></button>
              </div>
            </div>
            <label class="fx"><span>f<sub>x</sub></span><input type="text" aria-label="Fórmula" /></label>
          </div>
          <div class="bar b2">
            <div class="grp"><button class="w175" disabled><Icon n="ptr" />Seleccionar marca de revisión</button></div>
            <div class="grp"><button class="w42" disabled aria-label="Polilínea"><Icon n="poly" /><i class="dn big-dn"></i></button><button class="w31" disabled aria-label="Línea rápida"><Icon n="quick" /></button></div>
            <div class="grp"><button class="w41" disabled aria-label="Área"><Icon n="area" /><i class="dn big-dn"></i></button><button class="w41" disabled aria-label="Perímetro"><Icon n="perim" /><i class="dn big-dn"></i></button></div>
            <div class="grp"><button class="w31" disabled aria-label="Relleno"><Icon n="bucket" /></button><button class="w31" disabled aria-label="Recorte"><Icon n="backout" /></button></div>
            <div class="grp"><button class="w31" disabled aria-label="Añadir vértice"><Icon n="plus" /></button><button class="w31" disabled aria-label="Borrador"><Icon n="eraser" /></button></div>
            <div class="grp"><button class="w32" disabled aria-label="Recuento"><Icon n="hash" /></button></div>
            <div class="grp far"><button class="w165" disabled><Icon n="filter" />Filtro de marcas de revisión</button><button class="w32" disabled aria-label="Limpiar"><Icon n="brush" /></button></div>
          </div>

          <div class="panes">
            <div class="elements">
              <table>
                <colgroup><col /><col class="c-wbs" /></colgroup>
                <thead><tr><th>Elementos</th><th>WBS</th></tr></thead>
                <tbody>
                  <tr v-for="it in items" :key="it.wbs" :class="{ sel: it.name === 'Roofing' }">
                    <td>
                      <div class="name">
                        <svg :width="21 + it.depth * 11" height="22" aria-hidden="true">
                          <path :d="it.lines" stroke="#444" fill="none" />
                          <g v-if="it.box" :transform="`translate(${it.depth * 11} 0)`" stroke="#444">
                            <rect x="2.5" y="6.5" width="10" height="10" fill="#fff" :fill-opacity="it.name === 'Roofing' ? 0 : 1" />
                            <path :d="it.box === '+' ? 'M5 11.5h5M7.5 9v5' : 'M5 11.5h5'" />
                          </g>
                        </svg>
                        <Icon n="pages" /><span>{{ it.name }}</span>
                      </div>
                    </td>
                    <td>{{ it.wbs }}</td>
                  </tr>
                </tbody>
              </table>
            </div>
            <div class="right">
              <div class="sheet s1">
                <div class="clip">
                  <table>
                    <colgroup><col class="c50" /><col class="c80" /><col class="c151" /><col class="c150" /><col class="c60" /><col class="c150" /></colgroup>
                    <thead><tr><th>Estado</th><th>WBS</th><th class="thick">Nombre</th><th>Descripción</th><th>Comentari...</th><th>Longitud</th></tr></thead>
                    <tbody><tr><td></td><td>B.30</td><td class="thick nm">Roofing</td><td></td><td></td><td></td></tr></tbody>
                  </table>
                </div>
                <div class="hscroll"><i class="lf"></i><span class="thumb th1"></span></div>
              </div>
              <div class="sheet s2">
                <div class="clip">
                  <table>
                    <colgroup><col class="c50" /><col class="c80" /><col class="c151" /><col class="c60" /><col class="c60" /><col class="c150" /><col class="c60" /></colgroup>
                    <thead><tr><th>Estado</th><th>WBS</th><th class="thick">Objeto</th><th>Punto de...</th><th>Comentari...</th><th>LongitudModelo</th><th></th></tr></thead>
                  </table>
                </div>
                <div class="hscroll"><i class="lf"></i><span class="thumb th2"></span></div>
              </div>
            </div>
            <div class="mark mark-b"></div>
            <svg class="drag" width="22" height="32" viewBox="0 0 22 32" aria-hidden="true">
              <path d="M1 1V15L4.5 12 7 18 9.5 17 7 11.5H11Z" fill="#fff" stroke="#000" />
              <path d="M3 17v7h8M6 18h9" fill="none" stroke="#000" stroke-dasharray="1 1" stroke-width="1.5" />
              <rect x="10.5" y="20.5" width="10" height="10" fill="#fff" stroke="#000" />
              <path d="M13 28c0-3 1-4 4-4M14 23h4v4Z" fill="#000" stroke="#000" />
            </svg>
          </div>
          <div class="hscroll main"><i class="lf dark"></i><span class="thumb th3"></span><i class="rt"></i></div>
        </div>
      </section>

      <footer class="status">
        <Icon n="first" /><Icon n="prev" /><span class="count">1 de 1</span><Icon n="next" /><Icon n="last" />
        <Icon n="sheet" /><span class="line"></span>
        <div class="meters">
          <div><Icon n="pencil" /><span class="meter full"></span></div>
          <div><Icon n="disk" /><span class="meter part"></span></div>
          <div><Icon n="web" /><span class="meter"></span></div>
        </div>
        <span class="mb">740 MB</span>
      </footer>
      <div class="bottom"></div>
    </main>
    <div class="glass rightg"></div>
  </div>
</template>

<style>
body { background: #05080c; }
</style>
<style scoped>
* { box-sizing: border-box; }
.window { display: grid; grid-template-columns: 8px minmax(0, 1fr) 7px; min-height: 100vh; font: 11px/15px 'Open Sans', 'Noto Sans', sans-serif; color: #3c3c3c; overflow: hidden; }
.defs { position: absolute; }
button, input, select { font: inherit; color: inherit; margin: 0; padding: 0; border: 0; background: none; border-radius: 0; }
select { appearance: none; }
svg { flex: none; }
h2 { margin: 0; font-size: 11px; font-weight: 400; }
.glass.left { border-right: 1px solid #777; box-shadow: inset -2px 0 #0a0c10; background: linear-gradient(#29323c 0, #8495a5 3%, #15191f 7%, #37444f 15%, #0c1016 18%, #d8c0a0 23%, #c6ad8c 25%, #0c2430 29%, #5cc0b8 36%, #20a8a8 41%, #0c3c70 44%, #0a0e14 48%, #33465c 62%, #0a1a22 68%, #18c8dc 75%, #22d8ea 79%, #062028 82%, #0a0e12 88%, #1cc4d8 95%, #30dcec 100%); }
.glass.rightg { border-left: 1px solid #8a8a8a; background: linear-gradient(90deg, #222 1px, #06090d 3px); }
.app { display: flex; flex-direction: column; min-height: 100vh; min-width: 0; background: #a0a0a0; }
.dn, .up, .lf, .rt { display: inline-block; width: 0; height: 0; border: 3px solid transparent; }
.dn { border-top-color: #444; border-bottom: 0; }
.big-dn { border-width: 4px; border-bottom: 0; }
.light { border-top-color: #fff; }
.up { border-bottom-color: #555; border-top: 0; }
.lf { border-right-color: #777; border-left: 0; }
.rt { border-left-color: #333; border-right: 0; }
.lf.dark { border-right-color: #333; }

.menubar { display: flex; height: 16px; background: #404040; color: #eee; align-items: flex-start; font-size: 12px; }
.appbtn { width: 41px; height: 13px; border: 1px solid #aaa; border-top: 0; background: linear-gradient(90deg, #8c9a8c, #8f8f8f); margin-right: 4px; }
.tab { height: 15px; line-height: 14px; padding: 0 9px 1px 8px; white-space: nowrap; }
.tab.on { height: 16px; background: #fff; color: #333; padding: 0 9px 2px 10px; }
.tab.context { background: linear-gradient(#9cc08c, #b4d8a6); border: 1px solid #5ef01e; border-top: 0; color: #333; padding: 0 6px; margin-left: 3px; }
.mini { width: 13px; height: 8px; margin: 3px 4px 0 23px; border-radius: 2px; background: #e4e4e4; display: grid; place-items: center; }
.menubar > .dn { margin-top: 6px; }

.ribbon { display: flex; height: 108px; border-top: 1px solid #ddd; border-bottom: 2px solid #858585; background: #fff; padding-left: 1px; }
.panel { display: flex; flex-direction: column; border-right: 1px solid #a5a5a5; width: 99px; flex: none; }
.p-sel { width: 416px; } .p-vis { width: 88px; } .p-show { width: 52px; } .p-tools { width: 319px; border: 0; }
.panel h2 { height: 18px; margin: 0 1px; background: #eee; border-top: 1px solid #ddd; text-align: center; line-height: 15px; }
.panel h2 .dn { margin-left: 2px; vertical-align: 2px; }
.pbody { display: flex; flex: 1; padding: 8px 0 0 1px; align-items: flex-start; }
.big { display: flex; flex-direction: column; align-items: center; height: 72px; padding-top: 2px; text-align: center; white-space: nowrap; }
.big > svg { height: 32px; }
.big > span { margin-top: 4px; }
.big .dn { margin-top: 3px; }
.stack { display: flex; flex-direction: column; gap: 2px; padding-top: 1px; align-items: flex-start; }
.sm { width: 24px; height: 22px; border: 1px solid #ccc; background: #f8f8f8; display: flex; align-items: center; justify-content: center; gap: 4px; }
.sm.wide { width: 34px; } .sm.thin { width: 13px; border-left: 0; }
.pair { display: flex; }
.active, .split, .t3 { background: linear-gradient(#c4ddf5, #aacdf0); border: 1px solid #0f64bd; }
.addb { width: 40px; margin: 0 9px 0 10px; }
.split { width: 91px; padding: 0; }
.split .half { width: 100%; height: 37px; margin: 0; border-bottom: 1px solid #0f64bd; display: grid; place-items: center; }
.split > span:nth-child(2) { margin-top: 0; }
.save { width: 54px; }
.list { width: 141px; margin-left: 2px; }
.row { display: flex; height: 22px; align-items: center; gap: 4px; padding: 0 3px; white-space: nowrap; }
.row .dn { margin-left: 4px; }
.row.active { width: 127px; gap: 5px; }
.finds { width: 102px; }
.quick { display: flex; width: 101px; height: 22px; border: 1px solid #bbb; align-items: center; }
.quick input { width: 80px; min-width: 0; font-size: 10px; font-style: italic; padding-left: 3px; outline: 0; }
.quick input::placeholder { color: #777; opacity: 1; }
.setrow { display: flex; align-items: center; }
.conj { display: flex; width: 65px; height: 22px; border: 1px solid #ccc; background: #f4f4f4; align-items: center; padding: 0 2px; }
.conj select { flex: 1; min-width: 0; color: #000; }
.vsep { width: 1px; height: 22px; background: #ccc; margin: 0 5px; }
.vsep.tall { height: 72px; margin: 0 3px 0 5px; }
.ocult { width: 46px; }
.p-show .pbody { justify-content: center; padding-left: 0; }
.t1 { width: 56px; } .t2 { width: 58px; } .t3 { width: 82px; margin-right: 1px; padding-top: 1px; } .t4 { width: 66px; }
.grid6 { display: grid; grid-template-columns: 24px 24px; gap: 2px 1px; padding-top: 1px; }
.rest { flex: 1; background: linear-gradient(#d2d2d2, #909090); }

.docks { display: flex; height: 206px; padding: 3px 3px 3px 4px; gap: 2px; }
.dock { width: 330px; height: 199px; margin-top: 1px; border: 2px solid #666; background: linear-gradient(#777, #929292); display: flex; flex-direction: column; font: 10px/15px 'DejaVu Sans Condensed', 'DejaVu Sans', sans-serif; color: #111; }
.dtitle { height: 23px; display: flex; align-items: center; padding: 0 6px 0 5px; background: linear-gradient(#c4ddf5, #b8d4f0); border-bottom: 1px solid #777; }
.dtitle span { flex: 1; }
.close { font: 11px/12px 'DejaVu Sans', sans-serif; color: #000; }
.dbody { position: relative; height: 152px; background: #f0f0f0; padding: 5px 11px 0 10px; border-bottom: 1px solid #666; }
.combo { display: flex; align-items: center; height: 21px; border: 1px solid #777; border-radius: 2px; background: linear-gradient(#f8f8f8, #d6d6d6); padding: 0 4px 0 2px; }
.combo select { flex: 1; color: #111; }
.combo .dn { border-top-color: #000; }
.tree { position: relative; display: flex; height: 107px; margin-top: 5px; border: 1px solid #888; border-width: 1px 0 1px 1px; background: #fff; overflow: hidden; }
.tree ul { flex: 1; list-style: none; margin: -2px 0 0; padding: 0; }
.tree li { display: flex; height: 16px; align-items: center; padding-left: 13px; }
.tree li .trunk { width: 17px; height: 16px; border-left: 1px solid #999; border-right: 1px solid #999; }
.tree li .branch { width: 11px; height: 1px; background: #999; }
.tree li .box { width: 9px; height: 9px; border: 1px solid #222; border-radius: 1px; font: 9px/7px 'DejaVu Sans', sans-serif; text-align: center; }
.tree li svg { margin: 0 1px 0 2px; }
.tree li b { font-size: 11px; line-height: 13px; color: #000; }
.tree li.sel b { background: #3399ff; color: #fff; outline: 1px dashed #124; outline-offset: -1px; }
.tree li.sel .box { background: #3399ff; color: #fff; border-color: #124; }
.other { position: absolute; left: 189px; top: 0; font-size: 11px; color: #000; }
.vscroll { width: 17px; background: #f4f4f4; text-align: center; line-height: 15px; }
.vthumb { display: block; width: 14px; height: 22px; margin: 55px 1px 0; border: 1px solid #999; border-radius: 2px; background: repeating-linear-gradient(transparent 0 2px, #555 2px 3px) 50% 50% / 8px 9px no-repeat, linear-gradient(90deg, #f4f4f4, #ccc); }
.mark { position: absolute; border: 2px solid #c00000; box-shadow: 4px 4px 4px #0005, inset 4px 4px 4px #0003; pointer-events: none; }
.mark-a { left: 31px; top: 71px; width: 131px; height: 29px; }
.dtabs { display: flex; height: 20px; }
.dtabs button { padding: 0 12px; color: #4c4c4c; }
.dtabs .on { height: 18px; padding: 0 9px; color: #111; background: linear-gradient(#c0d9f2, #93abc4); border: 1px solid #666; border-top: 0; border-radius: 0 0 4px 4px; }
.view { position: relative; flex: 1; min-width: 0; background: #000; overflow: hidden; }
.scene { display: block; width: 100%; height: 100%; }
.coords { position: absolute; left: 33px; top: 150px; height: 24px; padding: 0 4px; border: 1px solid #8888; background: #8886; color: #fff; font: 14px/23px 'DejaVu Sans Condensed', sans-serif; white-space: nowrap; }
.navbar3d { position: absolute; right: 2px; top: 1px; width: 35px; height: 164px; border-radius: 4px; background: #2d2d2d; border: 1px solid #3c3c3c; display: flex; flex-direction: column; align-items: center; gap: 6px; }
.navbar3d .dn { border-top-color: #444; }
.navbar3d .last { margin-top: 5px; border-top-color: #777; }
.nx { align-self: flex-end; margin-right: 3px; font: 8px/10px 'DejaVu Sans', sans-serif; color: #999; }

.quantp { margin: 0 2px; border: 1px solid #5a5a5a; background: #f0f0f0; font: 10px/15px 'DejaVu Sans Condensed', 'DejaVu Sans', sans-serif; color: #000; overflow: hidden; }
.qtitle { display: flex; align-items: center; height: 22px; padding: 0 6px 0 5px; background: linear-gradient(#b4b4b4, #8c8c8c); border-bottom: 1px solid #5a5a5a; }
.qtitle span { flex: 1; }
.qtitle .close { margin-left: 8px; }
.qbody { padding-top: 10px; }
.bar { display: flex; gap: 16px; padding-left: 10px; }
.grp, .near { display: flex; }
.near { gap: 4px; }
.bar button { display: flex; align-items: center; justify-content: center; gap: 1px; height: 26px; border: 1px solid #777; border-bottom-color: #444; background: linear-gradient(#f4f4f4, #dcdcdc); white-space: nowrap; border-radius: 2px; }
.bar button + button { border-left: 0; }
.bar button:disabled { border-color: #aaa; background: #f2f2f2; color: #a8a8a8; }
.bar .dn { border-top-color: #000; margin-left: 2px; }
.bar button:disabled .dn { border-top-color: #888; }
.b2 { margin: 4px 0 8px; }
.b2 button { height: 32px; }
.b2 .dn { margin-left: 6px; }
.b2 .far { margin-left: 16px; }
.w31 { width: 31px; } .w32 { width: 32px; } .w40 { width: 40px; } .w41 { width: 41px; } .w42 { width: 42px; } .w88 { width: 88px; }
.w123 { width: 123px; } .w125 { width: 125px; } .w137 { width: 137px; } .w145 { width: 145px; } .w165 { width: 165px; } .w175 { width: 175px; }
.fx { display: flex; flex: 1; gap: 6px; margin-left: 6px; min-width: 0; align-items: flex-end; }
.fx span { font: italic 20px/26px 'Liberation Serif', serif; color: #333; }
.fx sub { font-size: 16px; line-height: 0; vertical-align: -3px; }
.fx input { flex: 1; min-width: 0; height: 23px; border: 2px solid #e2e5f0; border-top: 1px solid #a5a5ad; border-right: 0; background: #f4f4f4; }
.panes { position: relative; display: flex; gap: 8px; height: 228px; padding-left: 10px; }
.elements { width: 471px; border: 1px solid #7f9db9; background: #fff; font: 11px/15px 'Open Sans', 'Noto Sans', sans-serif; color: #222; overflow: hidden; }
table { border-collapse: separate; border-spacing: 0; table-layout: fixed; width: 100%; }
th, td { padding: 0; overflow: hidden; white-space: nowrap; }
.c-wbs { width: 117px; }
.elements th { height: 23px; background: linear-gradient(#f4f9fd, #dbe9f7); font-weight: 600; color: #2b4263; border-right: 1px solid #d5e2f0; padding-top: 3px; }
.elements td { height: 22px; border-bottom: 1px solid #f6f6f6; padding-left: 5px; }
.elements td:first-child { padding: 0; border-right: 2px solid #e2ebf5; }
.name { display: flex; height: 21px; align-items: center; }
.name span { margin-left: 2px; }
.elements .sel td { background: #3399ff; color: #fff; border-bottom-color: #3399ff; }
.elements .sel td:first-child { background: linear-gradient(90deg, #8da8cd, #9fb7d8); outline: 2px solid #26476f; outline-offset: -2px; }
.mark-b { left: 3px; top: 103px; width: 429px; height: 55px; }
.drag { position: absolute; left: 211px; top: 122px; }
.right { flex: 1; min-width: 0; display: flex; flex-direction: column; gap: 9px; }
.sheet { border: 1px solid #666; border-right: 0; background: #fff; display: flex; flex-direction: column; }
.s1 { height: 90px; } .s2 { height: 129px; }
.clip { flex: 1; overflow: hidden; }
.sheet table { width: 641px; }
.s2 table { width: 611px; }
.c50 { width: 50px; } .c60 { width: 60px; } .c80 { width: 80px; } .c150 { width: 150px; } .c151 { width: 151px; }
.sheet th { height: 20px; padding-left: 6px; background: linear-gradient(#f0f6fd, #d7e3f3); font-weight: 400; color: #2c4374; border-right: 1px solid #cfdcec; }
.sheet th:nth-child(n + 4) { padding-left: 1px; }
.sheet td { height: 20px; background: #629ae2; color: #fff; font-weight: 700; border-right: 1px solid #8fb6ea; }
.sheet .thick { border-right: 2px solid #4c5a6c; }
.sheet .nm { padding-left: 4px; }
.hscroll { display: flex; align-items: center; height: 17px; background: #ededed; padding-left: 6px; }
.thumb { height: 15px; margin-left: 8px; border: 1px solid #8f8f8f; border-radius: 2px; background: repeating-linear-gradient(90deg, #444 0 1px, transparent 1px 3px) 50% 50% / 8px 7px no-repeat, linear-gradient(#f6f6f6 50%, #c4c4c4 55%, #d0d0d0); }
.th1 { width: 304px; } .th2 { width: 192px; } .th3 { width: 754px; margin-left: 9px; }
.main { margin-top: 9px; border-top: 1px solid #fff; height: 18px; }
.main .rt { margin: 0 5px 0 auto; }

.status { display: flex; align-items: center; justify-content: flex-end; gap: 2px; height: 26px; padding-right: 6px; font-size: 11px; color: #000; }
.count { margin: 0 13px; }
.status .line { width: 1px; height: 18px; background: #eee; margin: 0 11px 0 8px; }
.meters { display: flex; gap: 5px; }
.meters > div { display: flex; flex-direction: column; align-items: center; }
.meter { width: 30px; height: 7px; border: 1px solid #222; background: #ccc; margin-top: 1px; }
.meter.full { background: #00f; }
.meter.part { background: linear-gradient(90deg, #00f 27px, #ccc 27px); }
.mb { font: 10px/15px 'DejaVu Sans Condensed', sans-serif; margin-left: 5px; }
.bottom { flex: 1; border-top: 1px solid #333; background: linear-gradient(#ccc 0 1px, #05080c 1px); min-height: 4px; }
</style>
